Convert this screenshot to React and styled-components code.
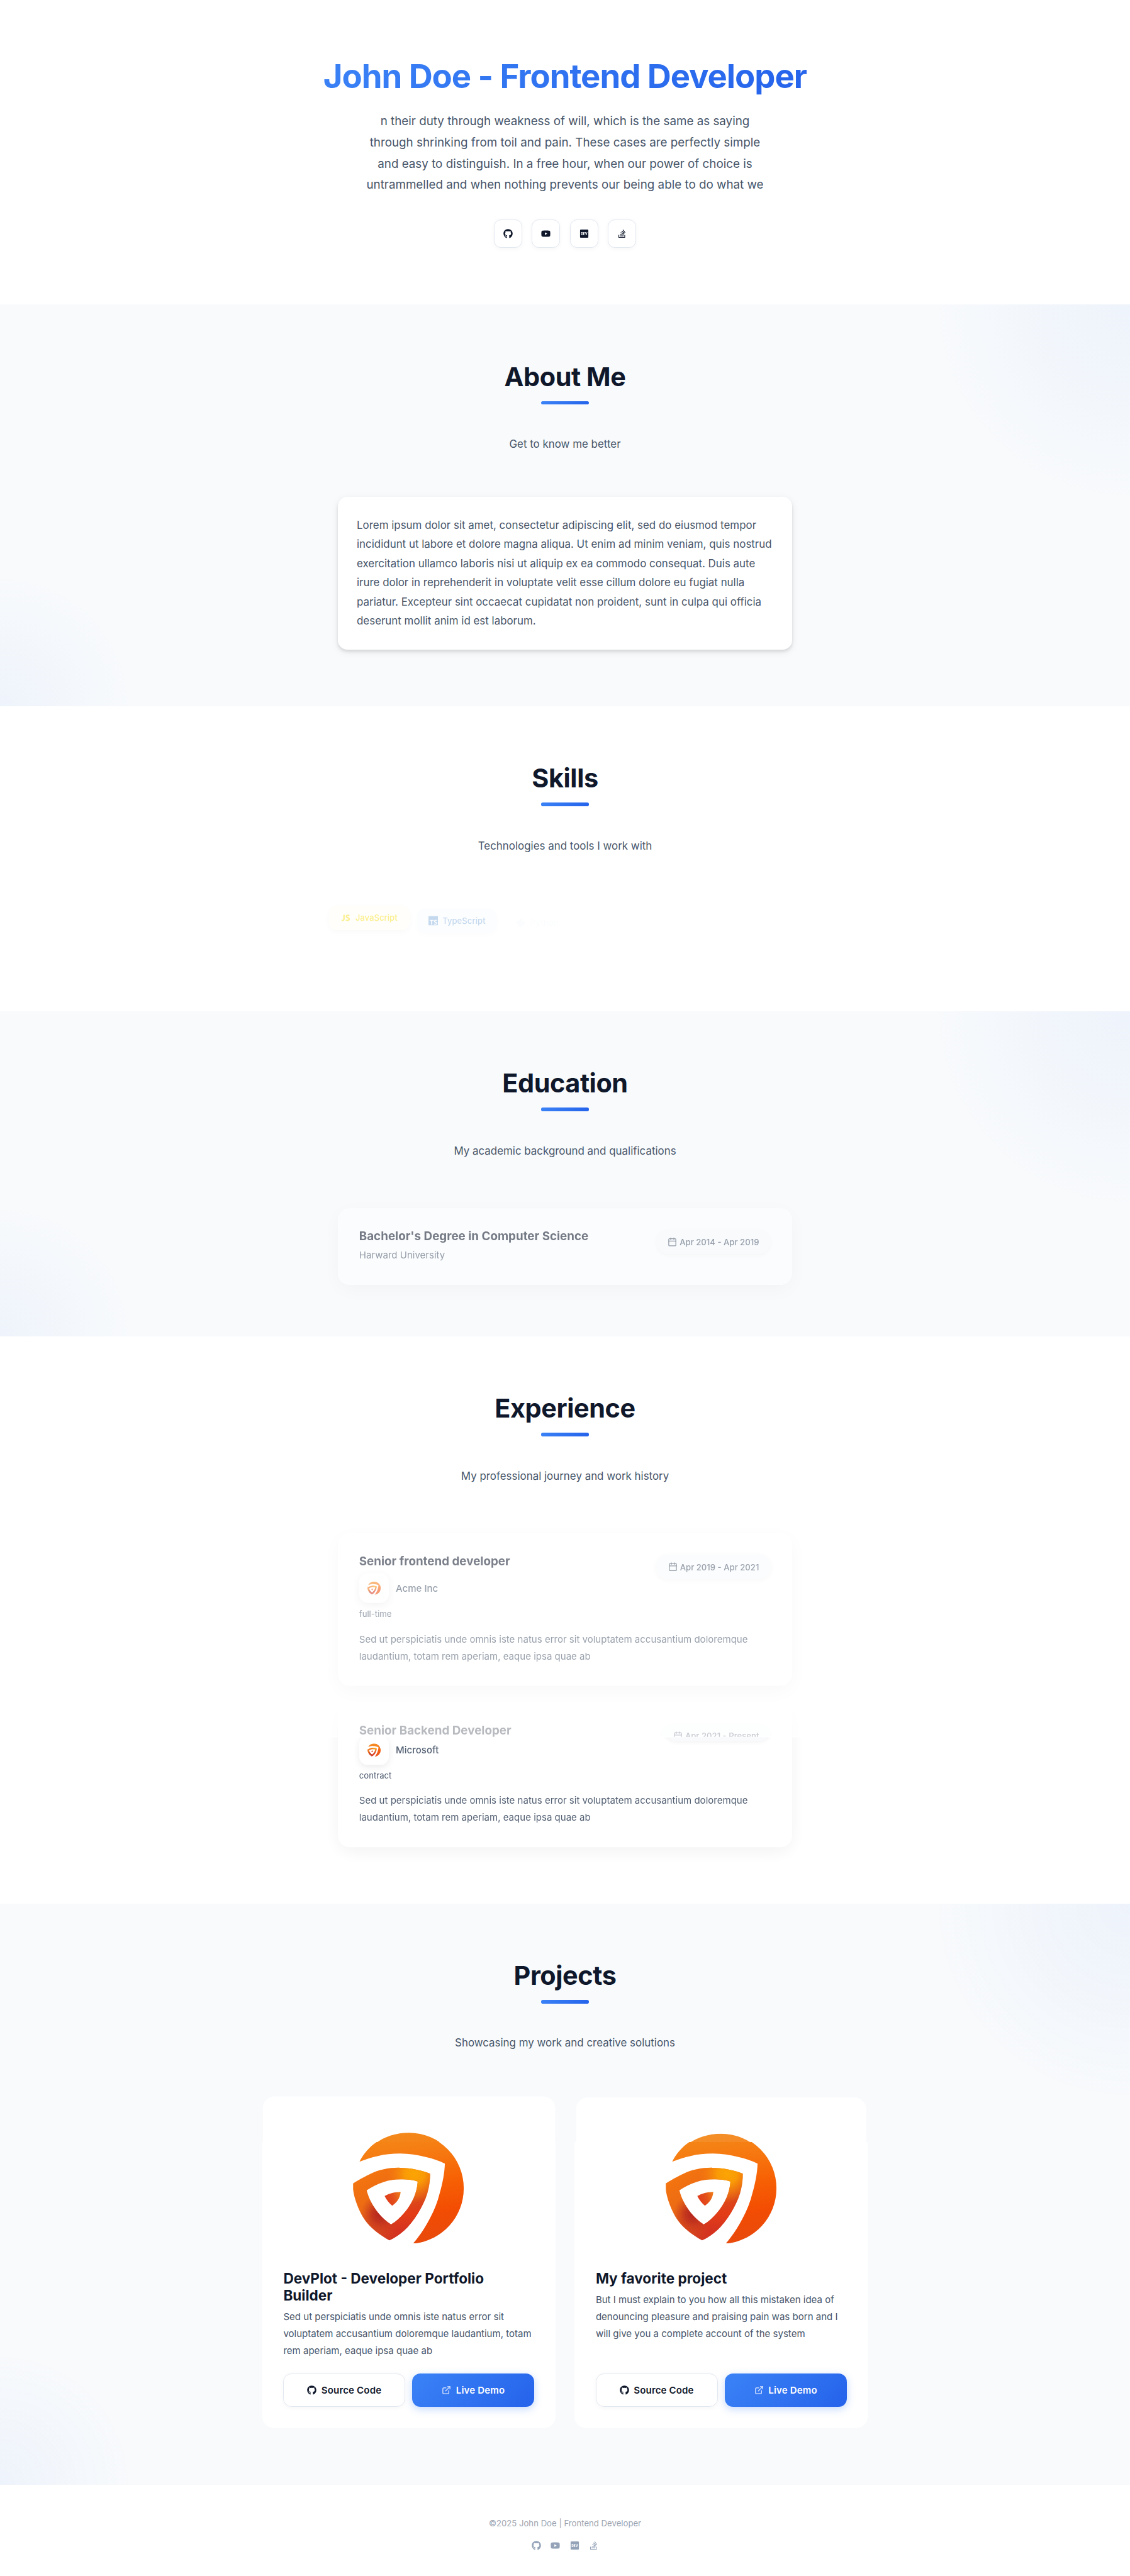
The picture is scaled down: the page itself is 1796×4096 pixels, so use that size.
import React, { useId } from "react";
import styled, { createGlobalStyle, css } from "styled-components";
import { FaGithub, FaYoutube, FaDev, FaStackOverflow, FaPython } from "react-icons/fa";
import { FiCalendar, FiExternalLink } from "react-icons/fi";
import { DiJavascript1 } from "react-icons/di";
import { SiTypescript } from "react-icons/si";

const color = {
  ink: "#0f172a",
  body: "#475569",
  muted: "#64748b",
  line: "#e2e8f0",
  tint: "#f8fafc",
  brand: "linear-gradient(135deg, #3b82f6 0%, #2563eb 100%)",
};

const GlobalStyle = createGlobalStyle`
  * { box-sizing: border-box; }
  body {
    margin: 0;
    background: #fff;
    font-family: Inter, "Liberation Sans", sans-serif;
  }
  h1, h2, h3, p { margin: 0; }
  svg { display: block; flex: none; }
`;

const Page = styled.div`
  zoom: 0.94031;
  color: ${color.ink};
`;

/* ---------- hero ---------- */

const Hero = styled.header`
  display: flex;
  flex-direction: column;
  align-items: center;
  height: 515px;
  padding-top: 96px;
`;

const HeroTitle = styled.h1`
  font-size: 56px;
  line-height: 67px;
  font-weight: 700;
  letter-spacing: -0.02em;
  background: ${color.brand};
  background-clip: text;
  -webkit-background-clip: text;
  color: transparent;
`;

const HeroText = styled.p`
  width: 700px;
  margin-top: 24px;
  font-size: 20px;
  line-height: 36px;
  text-align: center;
  color: ${color.body};
`;

const SocialRow = styled.div`
  display: flex;
  gap: 16px;
  margin-top: 40px;
`;

const SocialButton = styled.a`
  display: grid;
  place-items: center;
  width: 48px;
  height: 48px;
  border: 2px solid ${color.line};
  border-radius: 12px;
  background: #fff;
  box-shadow: 0 2px 8px rgba(0, 0, 0, 0.04);
  font-size: 16px;
`;

/* ---------- sections ---------- */

const Section = styled.section`
  display: flex;
  flex-direction: column;
  align-items: center;
  padding: 96px 0;
  ${(p) =>
    p.$tinted &&
    css`
      background:
        radial-gradient(circle at 100% 0, rgba(59, 130, 246, 0.05), rgba(59, 130, 246, 0.04) 110px, rgba(59, 130, 246, 0) 335px),
        radial-gradient(circle at 0 100%, rgba(59, 130, 246, 0.05), rgba(59, 130, 246, 0) 225px),
        ${color.tint};
    `}
`;

const SectionTitle = styled.h2`
  font-size: 44px;
  line-height: 53px;
  font-weight: 700;
  letter-spacing: -0.01em;
`;

const TitleBar = styled.div`
  width: 80px;
  height: 6px;
  margin-top: 14px;
  border-radius: 3px;
  background: ${color.brand};
`;

const Subtitle = styled.p`
  margin: 53px 0 75px;
  font-size: 18px;
  line-height: 28px;
  color: ${color.body};
`;

function SectionHead({ title, subtitle }) {
  return (
    <>
      <SectionTitle>{title}</SectionTitle>
      <TitleBar />
      <Subtitle>{subtitle}</Subtitle>
    </>
  );
}

const AboutCard = styled.div`
  width: 768px;
  padding: 32px;
  border-radius: 16px;
  background: #fff;
  box-shadow: 0 4px 6px -1px rgba(0, 0, 0, 0.1), 0 4px 14px rgba(0, 0, 0, 0.07);
  font-size: 18px;
  line-height: 32.4px;
  color: ${color.body};
`;

/* ---------- skills ---------- */

const SkillList = styled.div`
  display: flex;
  gap: 12px;
  width: 797px;
  height: 94.6px;
`;

const SkillTag = styled.div`
  display: flex;
  align-items: center;
  gap: 6px;
  height: 42px;
  padding: 0 20px 0 18px;
  border-radius: 14px;
  font-size: 14px;
  font-weight: 500;
  color: ${(p) => p.$color};
  background: ${(p) => p.$color}0d;
  box-shadow: 0 4px 12px rgba(0, 0, 0, 0.05);
  opacity: ${(p) => p.$opacity};
  transform: translateY(${(p) => p.$shift}px);
`;

const SkillIcon = styled.span`
  display: grid;
  place-items: center;
  width: 20px;
  height: 20px;
  font-size: ${(p) => p.$size}px;
`;

/* ---------- timeline cards ---------- */

const cardSurface = css`
  border-radius: 20px;
  background: #fff;
  box-shadow: 0 8px 32px rgba(0, 0, 0, 0.06);
`;

const TimelineCard = styled.article`
  width: 768px;
  min-height: 128.8px;
  padding: 36px;
  ${cardSurface}
  opacity: ${(p) => p.$opacity ?? 1};
  transform: translateY(${(p) => p.$shift ?? 0}px);
  clip-path: ${(p) => p.$clip ?? "none"};
`;

const CardHead = styled.div`
  display: flex;
  justify-content: space-between;
  align-items: flex-start;
  height: 24px;
`;

const CardTitle = styled.h3`
  font-size: 20px;
  line-height: 24px;
  font-weight: 700;
`;

const DateBadge = styled.div`
  display: flex;
  align-items: center;
  gap: 4px;
  height: 41px;
  min-width: ${(p) => p.$minWidth ?? 0}px;
  padding: 0 20px;
  border-radius: 20px;
  background: ${color.tint};
  box-shadow: 0 2px 8px rgba(0, 0, 0, 0.05);
  font-size: 14px;
  font-weight: 500;
  color: ${color.body};
`;

const School = styled.p`
  margin-top: 4px;
  font-size: 16px;
  line-height: 28.8px;
  color: ${color.body};
`;

const Company = styled.div`
  display: flex;
  align-items: center;
  gap: 12px;
  margin-top: 8px;
  font-size: 16px;
  font-weight: 500;
  color: ${color.body};
`;

const LogoTile = styled.div`
  display: grid;
  place-items: center;
  width: 50px;
  height: 50px;
  border-radius: 14px;
  background: #fff;
  box-shadow: 0 4px 12px rgba(0, 0, 0, 0.08);
`;

const JobType = styled.p`
  margin-top: 7px;
  font-size: 14px;
  line-height: 22px;
  color: ${color.body};
`;

const Description = styled.p`
  margin-top: ${(p) => p.$gap}px;
  font-size: 16px;
  line-height: 28.8px;
  color: ${color.body};
`;

const JobList = styled.div`
  display: grid;
  gap: 23px;
`;

const Layers = styled.div`
  display: grid;
  > * {
    grid-area: 1 / 1;
  }
`;

/* ---------- projects ---------- */

const ProjectGrid = styled.div`
  display: grid;
  grid-template-columns: 496px 496px;
  gap: 32px;
`;

const ProjectCard = styled.article`
  display: flex;
  flex-direction: column;
  height: 562px;
  padding: 36px;
  border-radius: 20px;
  background: #fff;
  clip-path: ${(p) => p.$clip};
  transform: ${(p) => p.$transform ?? "none"};
  opacity: ${(p) => p.$opacity ?? 1};
`;

const ProjectImage = styled.div`
  display: grid;
  place-items: center;
  height: 240px;
  margin-bottom: 18px;
`;

const ProjectTitle = styled.h3`
  font-size: 24px;
  line-height: 28.8px;
  font-weight: 700;
`;

const ButtonRow = styled.div`
  display: grid;
  grid-template-columns: 1fr 1fr;
  gap: 12px;
  margin-top: auto;
`;

const Button = styled.a`
  display: flex;
  align-items: center;
  justify-content: center;
  gap: 8px;
  height: 56px;
  border-radius: 14px;
  font-size: 16px;
  font-weight: 600;
  letter-spacing: 0.01em;
  ${(p) =>
    p.$primary
      ? css`
          color: #fff;
          background: ${color.brand};
          box-shadow: 0 4px 14px rgba(59, 130, 246, 0.3);
          svg { opacity: 0.85; }
        `
      : css`
          border: 2px solid ${color.line};
          background: #fff;
          box-shadow: 0 2px 8px rgba(0, 0, 0, 0.04);
        `}
`;

/* ---------- footer ---------- */

const Footer = styled.footer`
  display: flex;
  flex-direction: column;
  align-items: center;
  height: 154px;
  padding-top: 54px;
  color: #94a3b8;
  font-size: 14px;
  line-height: 22.4px;
`;

const FooterText = styled.p`
  color: #9ca3af;
`;

const FooterIcons = styled.div`
  display: flex;
  gap: 16px;
  margin-top: 18.6px;
  font-size: 16px;
`;

function ShieldLogo({ size }) {
  const id = useId();
  const url = (n) => `url(#${id}${n})`;
  const ring =
    "M0 86C8.500 81 14 77.500 28.400 70.400C44 62.500 62 59.300 79 59.600C98 60 116 63.500 130.500 69.600C130.500 79 129.500 87 127.800 95C125.500 107 120.500 118 115 128C108.500 140 101 151 92.600 160C83 170 72 178 61.500 182.500C52 177.500 43 171.500 35 164.600C24.500 155.500 17 145.500 11.500 133.600C4.500 118.500 1 106 0 96ZM23 97.900C27 113 33.500 124.500 42 135.400C48.500 143.500 56 150.500 64.200 155.700C72.500 151 79.500 144.500 85.900 137C93.500 128.500 98.500 120 102.800 110.400C106.500 101.500 108.800 92.500 109.500 82.900C100 80 90 79 81 79.300C71 79.500 61 80.500 52 83.600C40.500 87.500 31.500 92 23 97.900Z";
  return (
    <svg width={size} height={size} viewBox="0 0 188 188.500">
      <defs>
        <linearGradient id={id + "a"} x1="0" y1="0" x2="0.150" y2="1">
          <stop offset="0" stopColor="#f38a17" />
          <stop offset="0.250" stopColor="#f67c12" />
          <stop offset="0.550" stopColor="#f76004" />
          <stop offset="0.800" stopColor="#f34d03" />
          <stop offset="1" stopColor="#ea4a0a" />
        </linearGradient>
        <linearGradient id={id + "b"} gradientUnits="userSpaceOnUse" x1="0" y1="80" x2="62" y2="182">
          <stop offset="0" stopColor="#f4750f" />
          <stop offset="0.450" stopColor="#ec6a14" />
          <stop offset="0.800" stopColor="#d8461c" />
          <stop offset="1" stopColor="#cf3a20" />
        </linearGradient>
        <linearGradient id={id + "c"} gradientUnits="userSpaceOnUse" x1="0" y1="110" x2="0" y2="165">
          <stop offset="0" stopColor="#e03a18" stopOpacity="0" />
          <stop offset="0.500" stopColor="#e33d17" />
          <stop offset="1" stopColor="#d5331f" />
        </linearGradient>
        <linearGradient id={id + "m"} gradientUnits="userSpaceOnUse" x1="48" y1="0" x2="76" y2="0">
          <stop offset="0" stopColor="#fff" stopOpacity="0" />
          <stop offset="1" stopColor="#fff" />
        </linearGradient>
        <mask id={id + "k"} maskUnits="userSpaceOnUse" x="0" y="0" width="188" height="188">
          <rect width="188" height="188" fill={url("m")} />
        </mask>
        <radialGradient id={id + "d"} gradientUnits="userSpaceOnUse" cx="104" cy="70" r="48">
          <stop offset="0" stopColor="#fba504" />
          <stop offset="0.350" stopColor="#f99a06" />
          <stop offset="1" stopColor="#f4780e" stopOpacity="0" />
        </radialGradient>
        <radialGradient id={id + "e"} gradientUnits="userSpaceOnUse" cx="46" cy="138" r="34">
          <stop offset="0" stopColor="#b3241f" />
          <stop offset="0.400" stopColor="#b92a1f" stopOpacity="0.750" />
          <stop offset="1" stopColor="#c83a20" stopOpacity="0" />
        </radialGradient>
        <linearGradient id={id + "f"} x1="0" y1="0.300" x2="1" y2="0">
          <stop offset="0" stopColor="#e03c1b" />
          <stop offset="0.500" stopColor="#e4501a" />
          <stop offset="1" stopColor="#f08018" />
        </linearGradient>
      </defs>
      <path
        fill={url("a")}
        d="M10.800 49.300C26 19 56 0.200 94 0.200A94 94 0 0 1 187.500 94.300A94 94 0 0 1 101.400 188.300C112 176 122 161 129.800 146C137.500 132 143 118 146.700 103C151.500 86 155 69 155.500 52.500C145.500 48 135 44 123 41.400C109 37.500 94 35.300 79 35.400C66 35.400 54 36.500 42 39.600C31 42 20.500 45.500 10.800 49.300Z"
      />
      <path fillRule="evenodd" fill={url("b")} d={ring} />
      <path fillRule="evenodd" fill={url("c")} d={ring} mask={url("k")} />
      <path fillRule="evenodd" fill={url("d")} d={ring} />
      <path fillRule="evenodd" fill={url("e")} d={ring} />
      <path
        fill={url("f")}
        d="M53.400 107.500C61 103 70.500 100.500 80.500 100.400C80.300 104.500 79 108.500 77 112.500C74.500 117 71 120.500 66.300 124C61 119.500 56.500 114 53.400 107.500Z"
      />
    </svg>
  );
}

const socialIcons = [FaGithub, FaYoutube, FaDev, FaStackOverflow];

function DatePill({ children }) {
  return (
    <DateBadge>
      <FiCalendar size={16} />
      {children}
    </DateBadge>
  );
}

function JobBody({ company, type }) {
  return (
    <>
      <Company>
        <LogoTile>
          <ShieldLogo size={22.5} />
        </LogoTile>
        {company}
      </Company>
      <JobType>{type}</JobType>
      <Description $gap={17}>
        Sed ut perspiciatis unde omnis iste natus error sit voluptatem accusantium doloremque
        laudantium, totam rem aperiam, eaque ipsa quae ab
      </Description>
    </>
  );
}

function Project({ title, text, reveal }) {
  return (
    <Layers>
      <ProjectCard $clip="inset(0 0 483px 0)" $transform={reveal.transform} $opacity={reveal.opacity}>
        <ProjectImage>
          <ShieldLogo size={188} />
        </ProjectImage>
      </ProjectCard>
      <ProjectCard $clip="inset(78.500px 0 0 0)">
        <ProjectImage>
          <ShieldLogo size={188} />
        </ProjectImage>
        <ProjectTitle>{title}</ProjectTitle>
        <Description $gap={8}>{text}</Description>
        <ButtonRow>
          <Button>
            <FaGithub size={16} />
            Source Code
          </Button>
          <Button $primary>
            <FiExternalLink size={16} />
            Live Demo
          </Button>
        </ButtonRow>
      </ProjectCard>
    </Layers>
  );
}

export default function App() {
  return (
    <>
      <GlobalStyle />
      <Page>
        <Hero>
          <HeroTitle>John Doe - Frontend Developer</HeroTitle>
          <HeroText>
            n their duty through weakness of will, which is the same as saying through shrinking
            from toil and pain. These cases are perfectly simple and easy to distinguish. In a free
            hour, when our power of choice is untrammelled and when nothing prevents our being able
            to do what we
          </HeroText>
          <SocialRow>
            {socialIcons.map((Icon, i) => (
              <SocialButton key={i}>
                <Icon />
              </SocialButton>
            ))}
          </SocialRow>
        </Hero>

        <Section $tinted>
          <SectionHead title="About Me" subtitle="Get to know me better" />
          <AboutCard>
            Lorem ipsum dolor sit amet, consectetur adipiscing elit, sed do eiusmod tempor
            incididunt ut labore et dolore magna aliqua. Ut enim ad minim veniam, quis nostrud
            exercitation ullamco laboris nisi ut aliquip ex ea commodo consequat. Duis aute irure
            dolor in reprehenderit in voluptate velit esse cillum dolore eu fugiat nulla pariatur.
            Excepteur sint occaecat cupidatat non proident, sunt in culpa qui officia deserunt
            mollit anim id est laborum.
          </AboutCard>
        </Section>

        <Section>
          <SectionHead title="Skills" subtitle="Technologies and tools I work with" />
          <SkillList>
            <SkillTag $color="#f7df1e" $opacity={0.5} $shift={11.5}>
              <SkillIcon $size={20}>
                <DiJavascript1 />
              </SkillIcon>
              JavaScript
            </SkillTag>
            <SkillTag $color="#3178c6" $opacity={0.28} $shift={16.5}>
              <SkillIcon $size={16}>
                <SiTypescript />
              </SkillIcon>
              TypeScript
            </SkillTag>
            <SkillTag $color="#3776ab" $opacity={0.015} $shift={20}>
              <SkillIcon $size={16}>
                <FaPython />
              </SkillIcon>
              Python
            </SkillTag>
          </SkillList>
        </Section>

        <Section $tinted>
          <SectionHead title="Education" subtitle="My academic background and qualifications" />
          <TimelineCard $opacity={0.56} $shift={8.7}>
            <CardHead>
              <CardTitle>Bachelor's Degree in Computer Science</CardTitle>
              <DatePill>Apr 2014 - Apr 2019</DatePill>
            </CardHead>
            <School>Harward University</School>
          </TimelineCard>
        </Section>

        <Section>
          <SectionHead title="Experience" subtitle="My professional journey and work history" />
          <JobList>
            <TimelineCard $opacity={0.55} $shift={8.2}>
              <CardHead>
                <CardTitle>Senior frontend developer</CardTitle>
                <DatePill>Apr 2019 - Apr 2021</DatePill>
              </CardHead>
              <JobBody company="Acme Inc" type="full-time" />
            </TimelineCard>
            <Layers>
              <TimelineCard $opacity={0.3} $shift={13.4} $clip="inset(-60px -60px 199px -60px)">
                <CardHead>
                  <CardTitle>Senior Backend Developer</CardTitle>
                  <DatePill>Apr 2021 - Present</DatePill>
                </CardHead>
              </TimelineCard>
              <TimelineCard $opacity={0.93} $shift={1.4} $clip="inset(71px -60px -60px -60px)">
                <CardHead>
                  <span />
                  <DateBadge $minWidth={180} />
                </CardHead>
                <JobBody company="Microsoft" type="contract" />
              </TimelineCard>
            </Layers>
          </JobList>
        </Section>

        <Section $tinted>
          <SectionHead title="Projects" subtitle="Showcasing my work and creative solutions" />
          <ProjectGrid>
            <Project
              title="DevPlot - Developer Portfolio Builder"
              text="Sed ut perspiciatis unde omnis iste natus error sit voluptatem accusantium doloremque laudantium, totam rem aperiam, eaque ipsa quae ab"
              reveal={{ transform: "translateY(0.500px) scale(0.997)", opacity: 0.98 }}
            />
            <Project
              title="My favorite project"
              text="But I must explain to you how all this mistaken idea of denouncing pleasure and praising pain was born and I will give you a complete account of the system"
              reveal={{ transform: "translateY(0.500px) scale(0.990)", opacity: 0.92 }}
            />
          </ProjectGrid>
        </Section>

        <Footer>
          <FooterText>©2025 John Doe | Frontend Developer</FooterText>
          <FooterIcons>
            {socialIcons.map((Icon, i) => (
              <Icon key={i} />
            ))}
          </FooterIcons>
        </Footer>
      </Page>
    </>
  );
}
